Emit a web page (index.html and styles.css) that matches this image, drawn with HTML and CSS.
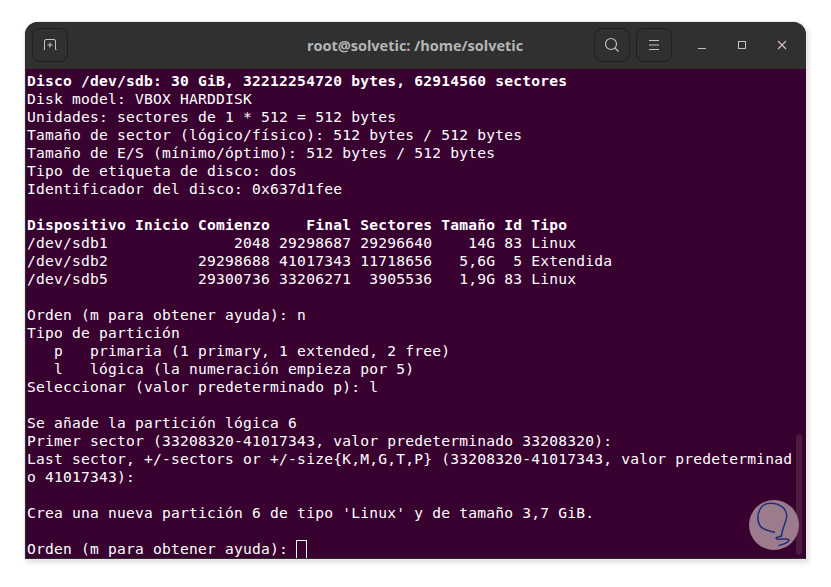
FILE: index.html
```html
<!DOCTYPE html>
<html lang="es">
<head>
<meta charset="utf-8">
<title>root@solvetic: /home/solvetic</title>
<link rel="stylesheet" href="styles.css">
</head>
<body>
<div class="window">
  <header class="titlebar">
    <div class="side">
      <button class="tbtn"><svg width="16" height="16" viewBox="0 0 16 16" fill="none" stroke="#c4c4c4" stroke-width="1"><path d="M1.500 12.500h1V4q0-1.500 1.500-1.500h8q1.500 0 1.500 1.500v8.500h1M8 5.500v5M5.500 8h5"/></svg></button>
    </div>
    <div class="title">root@solvetic: /home/solvetic</div>
    <div class="side right">
      <button class="tbtn"><svg width="16" height="16" viewBox="0 0 16 16" fill="none" stroke="#c9bcc4" stroke-width="1.200"><circle cx="7" cy="7" r="5.500"/><path d="M11 11l3.500 3.500"/></svg></button>
      <button class="tbtn"><svg width="12" height="12" viewBox="0 0 12 12" fill="none" stroke="#c4c4c4" stroke-width="1"><path d="M1 1.500h10M1 6h10M1 10.500h10"/></svg></button>
      <div class="wctl">
        <svg class="wico" width="12" height="12" viewBox="0 0 12 12" fill="none" stroke="#c4c4c4" stroke-width="1"><path d="M2 9.500h8"/></svg>
        <svg class="wico" width="12" height="12" viewBox="0 0 12 12" fill="none" stroke="#c4c4c4" stroke-width="1"><rect x="2.500" y="2.500" width="7" height="7"/></svg>
        <svg class="wico" width="12" height="12" viewBox="0 0 12 12" fill="none" stroke="#d3b8c6" stroke-width="1.200"><path d="M2 2l8 8M10 2l-8 8"/></svg>
      </div>
    </div>
  </header>
  <main class="term">
<pre class="output"><b>Disco /dev/sdb: 30 GiB, 32212254720 bytes, 62914560 sectores</b>
Disk model: VBOX HARDDISK
Unidades: sectores de 1 * 512 = 512 bytes
Tamaño de sector (lógico/físico): 512 bytes / 512 bytes
Tamaño de E/S (mínimo/óptimo): 512 bytes / 512 bytes
Tipo de etiqueta de disco: dos
Identificador del disco: 0x637d1fee

<b>Dispositivo Inicio Comienzo    Final Sectores Tamaño Id Tipo</b>
/dev/sdb1              2048 29298687 29296640    14G 83 Linux
/dev/sdb2          29298688 41017343 11718656   5,6G  5 Extendida
/dev/sdb5          29300736 33206271  3905536   1,9G 83 Linux

Orden (m para obtener ayuda): n
Tipo de partición
   p   primaria (1 primary, 1 extended, 2 free)
   l   lógica (la numeración empieza por 5)
Seleccionar (valor predeterminado p): l

Se añade la partición lógica 6
Primer sector (33208320-41017343, valor predeterminado 33208320):
Last sector, +/-sectors or +/-size{K,M,G,T,P} (33208320-41017343, valor predeterminad
o 41017343):

Crea una nueva partición 6 de tipo 'Linux' y de tamaño 3,7 GiB.

Orden (m para obtener ayuda): <span class="cursor"> </span></pre>
    <div class="scrollbar"></div>
    <svg class="logo" width="50" height="50" viewBox="0 0 50 50" fill="none">
      <circle cx="25" cy="25" r="25" fill="#9c7b8c"/>
      <path d="M26 32.500C20 30.500 11 30 9.500 22C7.500 14 11 3.500 21 3.300C31 3 38 9 37.700 16C37.500 23 33 27 32.500 36C30 37 27 37 27 38.500C28 41 38 37 40 40C40 43 33 44.500 29.300 45.700" stroke="#1d2f7c" stroke-width="1.500"/>
    </svg>
  </main>
</div>
</body>
</html>
```
FILE: styles.css
```css
html, body {
  margin: 0;
  padding: 0;
  background: #fff;
}
body {
  width: 831px;
  height: 587px;
  overflow: hidden;
  padding: 22px 25px 0;
  box-sizing: border-box;
}
.window {
  width: 781px;
  height: 537px;
  display: flex;
  flex-direction: column;
  border-radius: 13px 13px 0 0;
  overflow: hidden;
  box-shadow: 0 0 0 1px #e9e9e9, 2px 3px 5px 1px #e2e2e2;
  background: #303030;
}
.titlebar {
  height: 47px;
  flex: none;
  background: #303030;
  display: flex;
  align-items: center;
  padding: 0 0 1px 7px;
  box-sizing: border-box;
}
.side {
  flex: 1 1 0;
  display: flex;
  align-items: center;
  gap: 6px;
}
.side.right {
  justify-content: flex-end;
}
.tbtn {
  width: 36px;
  height: 34px;
  padding: 0;
  display: flex;
  align-items: center;
  justify-content: center;
  background: #303030;
  border: 1px solid #1f1f1f;
  border-radius: 8px;
}
.title {
  flex: none;
  margin-right: 8px;
  text-align: center;
  font: bold 14.500px "Open Sans", "Liberation Sans", sans-serif;
  color: #b4b6b6;
}
.wctl {
  display: flex;
  align-items: center;
  margin-left: 4px;
  padding-right: 4px;
}
.wico {
  display: block;
  width: 40px;
}
.term {
  flex: 1;
  position: relative;
  background: #380130;
  margin: 0 0 0 1px;
  border-bottom: 1px solid #2c2c2c;
  overflow: hidden;
}
.output {
  margin: 0;
  padding: 3px 0 0 1px;
  font: 14.600px/18px "DejaVu Sans Mono", "Liberation Mono", monospace;
  letter-spacing: 0.218px;
  color: #fff;
}
.output b {
  font-weight: bold;
}
.cursor {
  display: inline-block;
  width: 9px;
  height: 18px;
  margin-left: -1px;
  border: 1px solid #fff;
  box-sizing: content-box;
  vertical-align: top;
}
.scrollbar {
  position: absolute;
  right: 4px;
  top: 365px;
  width: 6px;
  height: 121px;
  background: #4f1a40;
  border-radius: 3px;
}
.logo {
  position: absolute;
  left: 723px;
  top: 431px;
}
```
